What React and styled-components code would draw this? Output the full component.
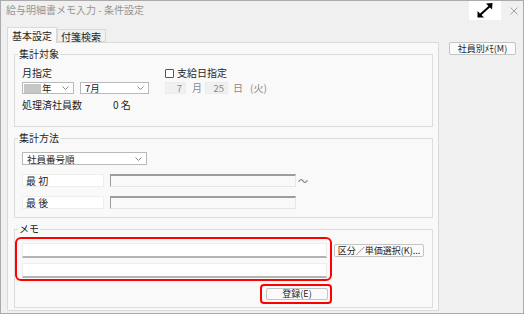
import React from "react";
import styled, { createGlobalStyle } from "styled-components";

const Global = createGlobalStyle`
  html, body { margin: 0; padding: 0; background: #ffffff; }
  body { font-family: "Noto Sans CJK JP", "Noto Sans", sans-serif; color: #1e1e1e; }
  * { box-sizing: border-box; }
`;

const Window = styled.div`
  width: 524px;
  height: 314px;
  border: 1px solid #ababab;
  background: #f0f0f0;
  display: flex;
  flex-direction: column;
`;

const TitleBar = styled.div`
  height: 22px;
  display: flex;
  align-items: flex-start;
  padding-left: 5px;
`;

const Title = styled.div`
  flex: 1;
  font-size: 10px;
  line-height: 18px;
  color: #959595;
  white-space: nowrap;
`;

const MaxBox = styled.div`
  width: 32px;
  height: 19px;
  background: #ffffff;
  display: flex;
  align-items: center;
  justify-content: center;
`;

const CloseBox = styled.div`
  width: 22px;
  height: 19px;
  display: flex;
  align-items: center;
  justify-content: center;
  padding-left: 4px;
`;

const Body = styled.div`
  display: flex;
  padding: 4px 7px 0 6px;
`;

const LeftCol = styled.div`
  width: 432px;
  display: flex;
  flex-direction: column;
`;

const TabRow = styled.div`
  display: flex;
  align-items: flex-end;
  height: 15px;
  position: relative;
  z-index: 1;
`;

const Tab = styled.div`
  font-size: 10px;
  line-height: 12px;
  height: ${(p) => (p.$active ? "16px" : "13px")};
  margin-bottom: ${(p) => (p.$active ? "-1px" : "0")};
  padding: ${(p) => (p.$active ? "2px 4px 0 4px" : "1px 4px 0 3px")};
  border: 1px solid #d9d9d9;
  border-bottom: ${(p) => (p.$active ? "none" : "1px solid #d9d9d9")};
  background: ${(p) => (p.$active ? "#f9f9f9" : "#f0f0f0")};
  color: #1e1e1e;
  white-space: nowrap;
`;

const Panel = styled.div`
  height: 269px;
  border: 1px solid #dadada;
  background: #f9f9f9;
  padding: 0 5px 0 6px;
  display: flex;
  flex-direction: column;
`;

const Group = styled.div`
  margin-top: 11px;
  height: ${(p) => p.$h}px;
  border: 1px solid #dddddd;
  padding: 0 7px;
  display: flex;
  flex-direction: column;
`;

const GroupTitle = styled.div`
  align-self: flex-start;
  margin: -7px 0 0 -4px;
  padding: 0 1px;
  background: #f9f9f9;
  font-size: 10px;
  line-height: 12px;
  height: 12px;
  color: #1e1e1e;
`;

const TwoCols = styled.div`
  display: grid;
  grid-template-columns: 143px 1fr;
  margin-top: 7px;
`;

const Stack = styled.div`
  display: flex;
  flex-direction: column;
`;

const Label = styled.div`
  font-size: 10px;
  line-height: 12px;
  height: 12px;
  white-space: nowrap;
  color: ${(p) => (p.$muted ? "#8a8a8a" : "#1e1e1e")};
`;

const Row = styled.div`
  display: flex;
  align-items: center;
  margin-top: ${(p) => p.$mt || 0}px;
  gap: ${(p) => p.$gap || 0}px;
`;

const SelectBox = styled.div`
  width: ${(p) => p.$w}px;
  height: ${(p) => p.$h || 12}px;
  border: 1px solid #b9b9b9;
  background: #ffffff;
  display: flex;
  align-items: center;
  padding: 0 4px 0 ${(p) => p.$pl ?? 4}px;
  font-size: 9.5px;
  line-height: 10px;
  color: #1e1e1e;
`;

const SelectText = styled.span`
  flex: 1;
  display: flex;
  align-items: center;
  white-space: nowrap;
`;

const Masked = styled.span`
  display: inline-block;
  width: 17px;
  height: 9px;
  background: #c6c6c6;
  margin-right: 1px;
`;

const CheckBox = styled.span`
  width: 9px;
  height: 9px;
  border: 1px solid #555555;
  border-radius: 1px;
  background: #ffffff;
  margin-right: 3px;
`;

const DateBox = styled.div`
  width: ${(p) => p.$w}px;
  height: 12px;
  background: #f0f0f0;
  border: 1px solid #ececec;
  font-size: 9.5px;
  line-height: 10px;
  color: #8a8a8a;
  text-align: right;
  padding-right: 3px;
`;

const Spacer = styled.span`
  display: inline-block;
  width: ${(p) => p.$w}px;
`;

const CountLabel = styled(Label)`
  width: 91px;
`;

const RangeLabel = styled.div`
  width: 82px;
  height: 13px;
  background: #ffffff;
  border: 1px solid #eeeeee;
  font-size: 10px;
  line-height: 11px;
  padding-left: 3px;
  white-space: pre;
`;

const RangeInput = styled.div`
  width: 186px;
  height: 13px;
  margin-left: 6px;
  background: #f9f9f9;
  border-top: 2px solid #9c9c9c;
  border-left: 1px solid #9c9c9c;
  border-right: 1px solid #e6e6e6;
  border-bottom: 1px solid #e6e6e6;
`;

const Tilde = styled.span`
  font-size: 10px;
  color: #707070;
  margin-left: 2px;
`;

const MemoGroup = styled(Group)`
  padding: 0 0 0 7px;
`;

const MemoArea = styled.div`
  display: flex;
  align-items: flex-start;
  margin: 2px 0 0 -7px;
`;

const MemoCol = styled.div`
  display: flex;
  flex-direction: column;
  align-items: flex-end;
`;

const RedFrame = styled.div`
  border: 2px solid #ff0000;
  border-radius: ${(p) => p.$r || 6}px;
  padding: ${(p) => p.$pad};
  display: flex;
  flex-direction: column;
  gap: 5px;
  margin-top: ${(p) => p.$mt || 0}px;
`;

const MemoInput = styled.div`
  width: 305px;
  height: 15px;
  background: #ffffff;
  border-top: 1px solid #ededed;
  border-left: 1px solid #ededed;
  border-right: 1px solid #ededed;
  border-bottom: 2px solid #b4b4b4;
`;

const Button = styled.div`
  width: ${(p) => p.$w}px;
  height: ${(p) => p.$h || 13}px;
  margin-top: ${(p) => p.$mt || 0}px;
  margin-left: ${(p) => p.$ml || 0}px;
  border: 1px solid #c4c4c4;
  border-radius: 2px;
  background: #fbfbfb;
  font-size: 9px;
  line-height: 10px;
  display: flex;
  align-items: center;
  justify-content: center;
  color: #1e1e1e;
  white-space: nowrap;
`;

const RightCol = styled.div`
  padding-top: 15px;
  margin-left: 10px;
`;

const Chevron = () => (
  <svg width="7" height="4" viewBox="0 0 7 4">
    <polyline points="0.5,0.5 3.5,3.5 6.5,0.5" fill="none" stroke="#8a8a8a" strokeWidth="1" />
  </svg>
);

export default function App() {
  return (
    <>
      <Global />
      <Window>
        <TitleBar>
          <Title>給与明細書メモ入力 - 条件設定</Title>
          <MaxBox>
            <svg width="16" height="15" viewBox="0 0 16 15">
              <line x1="3" y1="12" x2="13" y2="3" stroke="#000" strokeWidth="2" />
              <polygon points="9,0.5 15.5,0 15,6.5" fill="#000" />
              <polygon points="0.5,8 0.5,14.5 7,14.5" fill="#000" />
            </svg>
          </MaxBox>
          <CloseBox>
            <svg width="8" height="8" viewBox="0 0 8 8">
              <line x1="0.5" y1="0.5" x2="7.5" y2="7.5" stroke="#9a9a9a" strokeWidth="0.9" />
              <line x1="7.5" y1="0.5" x2="0.5" y2="7.5" stroke="#9a9a9a" strokeWidth="0.9" />
            </svg>
          </CloseBox>
        </TitleBar>
        <Body>
          <LeftCol>
            <TabRow>
              <Tab $active>基本設定</Tab>
              <Tab>付箋検索</Tab>
            </TabRow>
            <Panel>
              <Group $h={73}>
                <GroupTitle>集計対象</GroupTitle>
                <TwoCols>
                  <Stack>
                    <Label>月指定</Label>
                    <Row $mt={3} $gap={6}>
                      <SelectBox $w={52} $pl={1}>
                        <SelectText>
                          <Masked />年
                        </SelectText>
                        <Chevron />
                      </SelectBox>
                      <SelectBox $w={69}>
                        <SelectText>7月</SelectText>
                        <Chevron />
                      </SelectBox>
                    </Row>
                  </Stack>
                  <Stack>
                    <Row>
                      <CheckBox />
                      <Label>支給日指定</Label>
                    </Row>
                    <Row $mt={3}>
                      <DateBox $w={21}>7</DateBox>
                      <Spacer $w={6} />
                      <Label $muted>月</Label>
                      <Spacer $w={3} />
                      <DateBox $w={23}>25</DateBox>
                      <Spacer $w={5} />
                      <Label $muted>日</Label>
                      <Spacer $w={7} />
                      <Label $muted>(火)</Label>
                    </Row>
                  </Stack>
                </TwoCols>
                <Row $mt={5}>
                  <CountLabel>処理済社員数</CountLabel>
                  <Label>0 名</Label>
                </Row>
              </Group>

              <Group $h={80}>
                <GroupTitle>集計方法</GroupTitle>
                <Row $mt={8}>
                  <SelectBox $w={125} $h={13}>
                    <SelectText>社員番号順</SelectText>
                    <Chevron />
                  </SelectBox>
                </Row>
                <Row $mt={8}>
                  <RangeLabel>最 初</RangeLabel>
                  <RangeInput />
                  <Tilde>～</Tilde>
                </Row>
                <Row $mt={8}>
                  <RangeLabel>最 後</RangeLabel>
                  <RangeInput />
                </Row>
              </Group>

              <MemoGroup $h={79}>
                <GroupTitle>メモ</GroupTitle>
                <MemoArea>
                  <MemoCol>
                    <RedFrame $pad="4px 3px 1px 5px">
                      <MemoInput />
                      <MemoInput />
                    </RedFrame>
                    <RedFrame $r={4} $pad="2px 2px 2px 4px" $mt={3}>
                      <Button $w={62} $h={12}>登録(E)</Button>
                    </RedFrame>
                  </MemoCol>
                  <Button $w={90} $mt={7} $ml={2}>区分／単価選択(K)...</Button>
                </MemoArea>
              </MemoGroup>
            </Panel>
          </LeftCol>
          <RightCol>
            <Button $w={67} $h={13}>社員別ﾒﾓ(M)</Button>
          </RightCol>
        </Body>
      </Window>
    </>
  );
}
